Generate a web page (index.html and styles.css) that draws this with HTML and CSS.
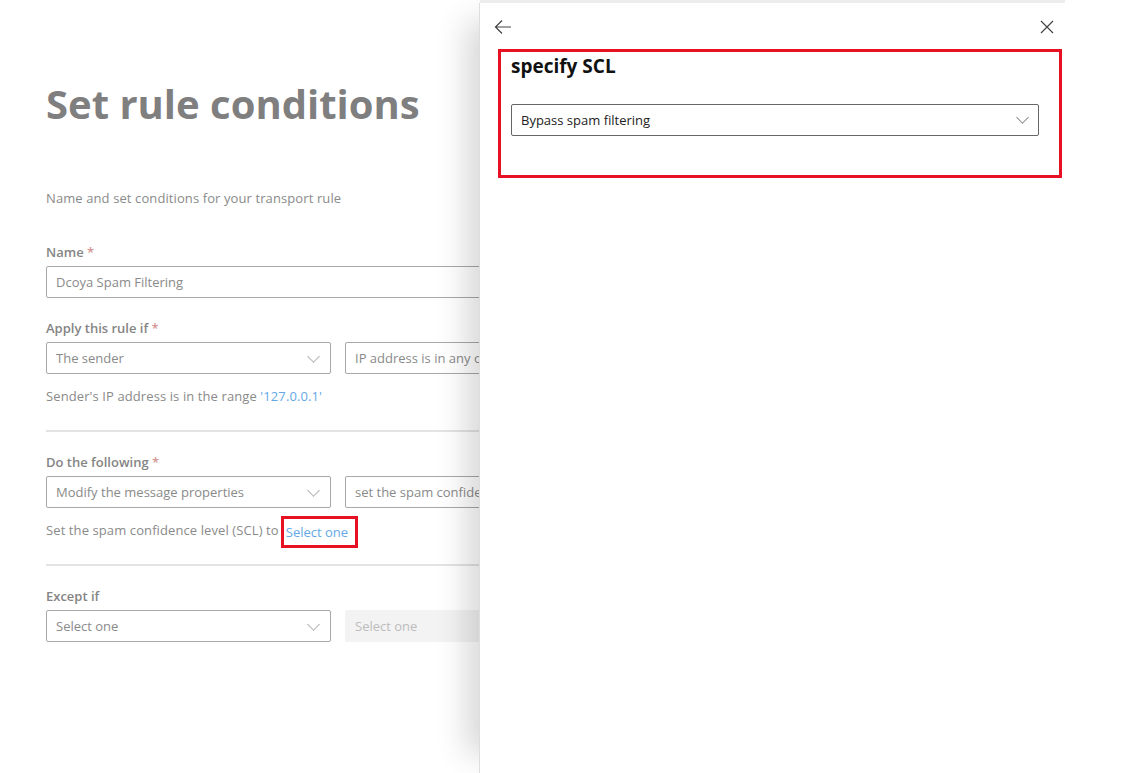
FILE: index.html
```html
<!DOCTYPE html>
<html lang="en">
<head>
    <meta charset="UTF-8">
    <title>Set rule conditions</title>
    <link rel="stylesheet" href="styles.css">
</head>
<body>
<div class="page">
    <div class="main">
        <h1 class="title">Set rule conditions</h1>
        <p class="subtitle">Name and set conditions for your transport rule</p>

        <div class="field first">
            <label class="label">Name <span class="req">*</span></label>
            <div class="textbox wide">Dcoya Spam Filtering</div>
        </div>

        <div class="field">
            <label class="label">Apply this rule if <span class="req">*</span></label>
            <div class="row">
                <div class="select">The sender<span class="chev"></span></div>
                <div class="select">IP address is in any of these ranges or exactly matches<span class="chev"></span></div>
            </div>
            <p class="hint">Sender's IP address is in the range <a class="link">'127.0.0.1'</a></p>
        </div>

        <hr class="divider">

        <div class="field">
            <label class="label">Do the following <span class="req">*</span></label>
            <div class="row">
                <div class="select">Modify the message properties<span class="chev"></span></div>
                <div class="select">set the spam confidence level (SCL)<span class="chev"></span></div>
            </div>
            <p class="hint">Set the spam confidence level (SCL) to<a class="link marked">Select one</a></p>
        </div>

        <hr class="divider">

        <div class="field">
            <label class="label">Except if</label>
            <div class="row">
                <div class="select">Select one<span class="chev"></span></div>
                <div class="select disabled">Select one</div>
            </div>
        </div>
    </div>

    <div class="panel">
        <div class="panel-top">
            <button class="icon-btn" aria-label="Back">
                <svg width="18" height="18" viewBox="0 0 18 18"><path d="M17 9H2M8 2.5L1.5 9 8 15.5" fill="none" stroke="#444" stroke-width="1.2"/></svg>
            </button>
            <button class="icon-btn" aria-label="Close">
                <svg width="14" height="14" viewBox="0 0 14 14"><path d="M1 1l12 12M13 1L1 13" fill="none" stroke="#444" stroke-width="1.2"/></svg>
            </button>
        </div>
        <div class="scl-box">
            <h2 class="scl-title">specify SCL</h2>
            <div class="scl-select">Bypass spam filtering<span class="chev dark"></span></div>
        </div>
    </div>
</div>
</body>
</html>
```

FILE: styles.css
```css
body {
    margin: 0;
    font-family: "Open Sans", "Noto Sans", sans-serif;
    background-color: #fff;
}

.page {
    display: flex;
    height: 773px;
    overflow: hidden;
}

.main {
    width: 479px;
    flex-shrink: 0;
    overflow: hidden;
    padding-left: 46px;
    box-sizing: border-box;
    color: #858585;
}

.title {
    margin: 78px 0 0;
    font-size: 40px;
    font-weight: 700;
    color: #7f7f7f;
    line-height: 52px;
    white-space: nowrap;
}

.subtitle {
    margin: 58px 0 0;
    font-size: 13px;
    line-height: 20px;
    color: #8a8a8a;
    letter-spacing: 0.1px;
}

.field {
    margin-top: 20px;
    width: 700px;
}

.field.first {
    margin-top: 34px;
}

.label {
    display: block;
    font-size: 13px;
    font-weight: 600;
    line-height: 20px;
    color: #858585;
    margin-bottom: 4px;
}

.req {
    color: #d59595;
}

.textbox,
.select {
    box-sizing: border-box;
    height: 32px;
    border: 1px solid #a8a8a8;
    border-radius: 2px;
    padding: 0 9px;
    font-size: 13px;
    line-height: 30px;
    color: #8a8a8a;
    white-space: nowrap;
    overflow: hidden;
    background: #fff;
}

.textbox.wide {
    width: 650px;
}

.row {
    display: flex;
    gap: 14px;
}

.select {
    width: 285px;
    position: relative;
    padding-right: 30px;
}

.row .select:last-child {
    width: 400px;
}

.select.disabled {
    border-color: #f3f3f3;
    background: #f3f3f3;
    color: #bcbcbc;
}

.chev {
    position: absolute;
    right: 12px;
    top: 9px;
    width: 8px;
    height: 8px;
    border-right: 1px solid #b0b0b0;
    border-bottom: 1px solid #b0b0b0;
    transform: rotate(45deg);
}

.chev.dark {
    border-color: #888;
    right: 11px;
    top: 8px;
}

.hint {
    margin: 12px 0 0;
    height: 20px;
    font-size: 13px;
    line-height: 20px;
    color: #8a8a8a;
    white-space: nowrap;
    letter-spacing: 0.1px;
}

.link {
    color: #64a8e6;
}

.link.marked {
    display: inline-block;
    margin-left: 2px;
    padding: 3px 7px 3px 2px;
    margin-top: -4px;
    border: 3px solid #e81123;
    vertical-align: top;
    line-height: 20px;
    letter-spacing: 0;
}

.divider {
    margin: 24px 0 0;
    width: 500px;
    border: none;
    border-top: 2px solid #e3e3e3;
}

.panel {
    width: 586px;
    flex-shrink: 0;
    margin-top: 3px;
    background: #fff;
    box-shadow: -30px 0 30px -18px rgba(0, 0, 0, 0.16);
    border-left: 1px solid #dedede;
    box-sizing: border-box;
    position: relative;
}

.panel::before {
    content: "";
    position: absolute;
    top: -3px;
    left: 0;
    right: 0;
    height: 3px;
    background: #ededed;
}

.panel-top {
    display: flex;
    justify-content: space-between;
    align-items: center;
    height: 46px;
    padding: 2px 11px 0 14px;
    box-sizing: border-box;
}

.icon-btn {
    background: none;
    border: none;
    padding: 0;
    display: flex;
    cursor: pointer;
}

.scl-box {
    margin-left: 18px;
    width: 564px;
    height: 129px;
    box-sizing: border-box;
    border: 3px solid #e81123;
    padding: 1px 20px 0 10px;
}

.scl-title {
    margin: 0;
    font-size: 19px;
    font-weight: 700;
    color: #111;
    line-height: 26px;
}

.scl-select {
    position: relative;
    margin-top: 25px;
    height: 32px;
    box-sizing: border-box;
    border: 1px solid #666;
    border-radius: 2px;
    padding: 0 9px;
    font-size: 13px;
    line-height: 30px;
    color: #222;
}
```
